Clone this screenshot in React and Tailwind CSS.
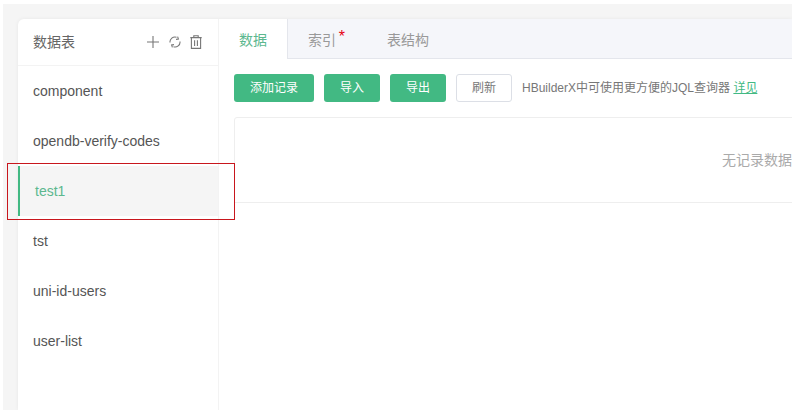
import React from 'react';

const font = "font-['Liberation_Sans','Noto_Sans_CJK_SC',sans-serif]";
const tables = ['component', 'opendb-verify-codes', 'test1', 'tst', 'uni-id-users', 'user-list'];

const PlusIcon = () => (
  <svg width="14" height="14" viewBox="0 0 14 14" fill="none" stroke="#777" strokeWidth="1.1">
    <path d="M7 1v12M1 7h12" />
  </svg>
);

const RefreshIcon = () => (
  <svg width="12" height="12" viewBox="0 0 12 12" fill="none" stroke="#777" strokeWidth="1.1">
    <path d="M1 6.5A5 5 0 0 1 7.5 1.2M11 5.5A5 5 0 0 1 4.5 10.8" />
    <path d="M8.6 0.6 9.4 3 7 3.4M3.4 11.4 2.6 9 5 8.6" />
  </svg>
);

const TrashIcon = () => (
  <svg width="12" height="14" viewBox="0 0 12 14" fill="none" stroke="#777" strokeWidth="1.1">
    <path d="M0.3 2.6h11.4M3.8 2.6V0.8h4.4v1.8M1.4 2.6v10.8h9.2V2.6M4.6 5.2v5.8M7.4 5.2v5.8" />
  </svg>
);

const GreenButton = ({ children, width }) => (
  <button className={`h-7 ${width} rounded-[3px] bg-[#42b983] text-xs text-white`}>{children}</button>
);

const App = () => {
  return (
    <div className={`${font} relative h-[410px] w-[792px] overflow-hidden bg-white`}>
      <div className="ml-[3px] mt-1 h-[406px] bg-[#f5f5f5] pl-[15px] pt-[15px]">
        <div className="flex h-full rounded-tl-md bg-white shadow-[0_0_4px_rgba(0,0,0,0.06)]">
          <aside className="w-[201px] shrink-0 border-r border-[#f3f3f3]">
            <div className="flex h-[47px] items-center justify-between border-b border-[#f3f3f3] pl-[15px] pr-[16px]">
              <span className="text-sm text-[#666]">数据表</span>
              <div className="flex items-center gap-[9px]">
                <PlusIcon />
                <RefreshIcon />
                <TrashIcon />
              </div>
            </div>
            <ul>
              {tables.map((name) => (
                <li
                  key={name}
                  className={
                    name === 'test1'
                      ? 'flex h-[50px] items-center border-l-2 border-[#42b983] bg-[#f5f5f5] pl-[15px] text-sm text-[#5cb88f]'
                      : 'flex h-[50px] items-center pl-[15px] text-sm text-[#555]'
                  }
                >
                  {name}
                </li>
              ))}
            </ul>
          </aside>

          <main className="min-w-0 flex-1">
            <div className="flex h-[40px] border-b border-[#e4e6ec] bg-[#f5f6fa]">
              <div className="-mb-px flex h-[40px] w-[69px] items-center justify-center border-r border-[#e4e6ec] bg-white pt-[2px] text-sm text-[#5cb88f]">
                数据
              </div>
              <div className="relative ml-5 flex items-center pt-[2px] text-sm text-[#999]">
                索引
                <span className="absolute -right-[9px] top-[10px] text-base leading-none text-[#e60012]">*</span>
              </div>
              <div className="ml-[51px] flex items-center pt-[2px] text-sm text-[#999]">表结构</div>
            </div>

            <div className="pl-[15px] pt-[15px]">
              <div className="flex items-center gap-[10px]">
                <GreenButton width="w-20">添加记录</GreenButton>
                <GreenButton width="w-14">导入</GreenButton>
                <GreenButton width="w-14">导出</GreenButton>
                <button className="h-7 w-14 rounded-[3px] border border-[#dcdfe6] bg-white text-xs text-[#777]">刷新</button>
                <p className="text-xs text-[#777]">
                  HBuilderX中可使用更方便的JQL查询器 <a className="text-[#42b983] underline">详见</a>
                </p>
              </div>
              <div className="mt-[15px] flex h-[86px] w-[1046px] items-center justify-center rounded-tl-[3px] border border-[#eeeeee] text-sm text-[#aaa]">
                无记录数据
              </div>
            </div>
          </main>
        </div>
      </div>
      {/* red highlight drawn over the screenshot */}
      <div className="absolute left-[7px] top-[163px] h-[57px] w-[228px] border border-[#c8161d]" />
    </div>
  );
};

export default App;
